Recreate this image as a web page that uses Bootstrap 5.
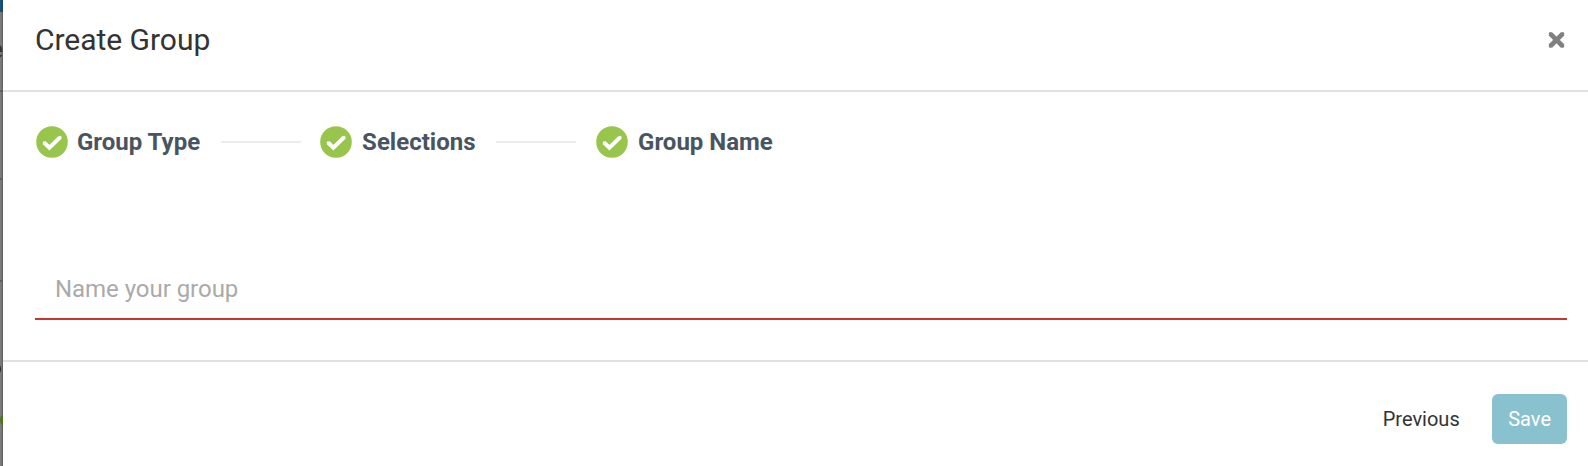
<!DOCTYPE html>
<html lang="en">
<head>
<meta charset="utf-8">
<title>Create Group</title>
<link href="https://cdn.jsdelivr.net/npm/bootstrap@5.3.0/dist/css/bootstrap.min.css" rel="stylesheet">
<style>
  body { font-family: Roboto, sans-serif; color: #333; height: 466px; overflow: hidden; }
  .backdrop-strip { position: relative; width: 3px; overflow: hidden; background: linear-gradient(90deg, #7c7c7c 0 1px, #757575 1px 2px, #626262 2px 3px); }
  .backdrop-strip > * { position: absolute; }
  .strip-bar { inset: 0 0 auto 0; height: 12px; background: linear-gradient(90deg, #1c5484, #174266); }
  .strip-letter { right: 0; top: 34px; font-size: 26px; line-height: 30px; color: #353535; }
  .strip-rule { left: 0; width: 3px; height: 2px; background: #5f5f5f; }
  .strip-dark { left: -13px; top: 362px; width: 14px; height: 14px; border-radius: 50%; background: #222a31; }
  .strip-green { left: 0; top: 413px; width: 14px; height: 14px; border-radius: 50%; background: #4d7417; }
  .dialog-head { height: 92px; border-bottom: 2px solid #dee2e6; padding: 0 21px 11px 32px; }
  .dialog-title { font-size: 30px; font-weight: 400; line-height: 36px; letter-spacing: -.03px; }
  .dialog-main { height: 270px; border-bottom: 2px solid #dee2e6; padding: 34px 21px 0 32px; }
  .step { font-size: 24px; font-weight: 700; line-height: 32px; color: #495461; white-space: nowrap; }
  .step svg { margin-left: 1px; margin-right: 9px; }
  .step-line + .step svg { margin-left: 0; margin-right: 10px; }
  .step-line + .step:last-child svg { margin-left: .6px; }
  .step-line { width: 80px; height: 2px; background: #ececec; margin: 0 19px 0 21px; }
  .name-input { margin-top: 98px; height: 64px; border: 0; border-bottom: 2px solid #cc3333; border-radius: 0; padding: 4px 20px 0; font-size: 24px; letter-spacing: -.04px; }
  .name-input::placeholder { color: #aaa; opacity: 1; }
  .dialog-foot { height: 104px; padding: 32px 21px 0; }
  .dialog-foot .btn { font-size: 20px; line-height: 30px; height: 50px; border: 0; padding: 10px 16px; border-radius: 6px; }
  .dialog-foot .btn-previous { color: #333; padding-right: 16.5px; }
  .btn-save, .btn-save:disabled { background: #8ac1cf; color: #fff; opacity: 1; }
</style>
</head>
<body class="d-flex">
<div class="backdrop-strip flex-shrink-0" aria-hidden="true">
  <span class="strip-bar"></span>
  <span class="strip-letter">e</span>
  <span class="strip-rule" style="top:90px"></span>
  <span class="strip-rule" style="top:178px"></span>
  <span class="strip-rule" style="top:280px"></span>
  <span class="strip-dark"></span>
  <span class="strip-green"></span>
</div>
<svg class="d-none">
  <symbol id="check" viewBox="0 0 32 32">
    <circle cx="16" cy="16" r="15.8" fill="#98c54b"/>
    <path d="M8 16.6 13.4 21.7 24.3 11.1" fill="none" stroke="#fff" stroke-width="4.1"/>
    <path d="M8 16.6 13.4 21.7 24.3 11.1" fill="none" stroke="#fff" stroke-width="2.6" stroke-linecap="round"/>
  </symbol>
</svg>
<div class="flex-grow-1 bg-white">
  <header class="dialog-head d-flex align-items-center justify-content-between">
    <h1 class="dialog-title m-0">Create Group</h1>
    <button type="button" class="btn p-0 border-0 d-flex" aria-label="Close">
      <svg width="20" height="20" viewBox="0 0 20 20"><g stroke="#808080"><path d="M3.2 3.6 15.8 16.2M15.8 3.6 3.2 16.2" stroke-width="4.8"/><path d="M3.2 3.6 15.8 16.2M15.8 3.6 3.2 16.2" stroke-width="3" stroke-linecap="round"/></g></svg>
    </button>
  </header>
  <main class="dialog-main">
    <div class="d-flex align-items-center">
      <div class="step d-flex align-items-center"><svg width="32" height="32"><use href="#check"/></svg>Group Type</div>
      <div class="step-line"></div>
      <div class="step d-flex align-items-center"><svg width="32" height="32"><use href="#check"/></svg>Selections</div>
      <div class="step-line"></div>
      <div class="step d-flex align-items-center"><svg width="32" height="32"><use href="#check"/></svg>Group Name</div>
    </div>
    <input class="form-control name-input" type="text" placeholder="Name your group">
  </main>
  <footer class="dialog-foot d-flex justify-content-end gap-3">
    <button type="button" class="btn btn-previous">Previous</button>
    <button type="button" class="btn btn-save" disabled>Save</button>
  </footer>
</div>
<script src="https://cdn.jsdelivr.net/npm/bootstrap@5.3.0/dist/js/bootstrap.bundle.min.js"></script>
</body>
</html>
